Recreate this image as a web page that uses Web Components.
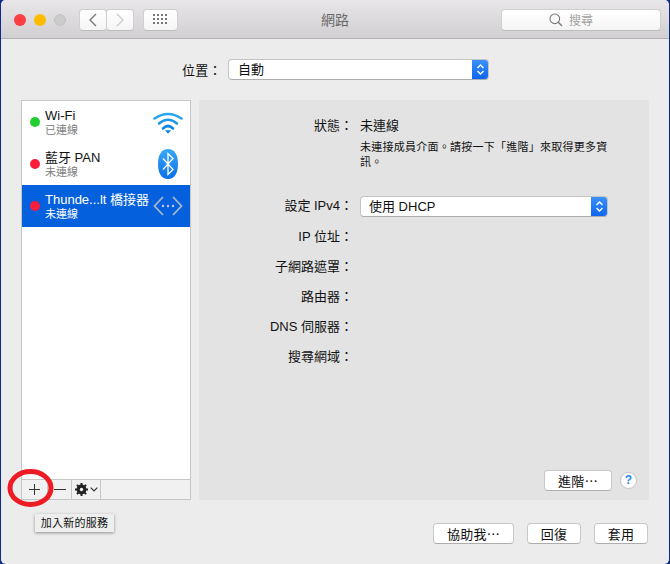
<!doctype html>
<html>
<head>
<meta charset="utf-8">
<style>
html,body{margin:0;padding:0;background:#0b2a8a;}
body{width:670px;height:564px;overflow:hidden;font-family:"Liberation Sans","Noto Sans CJK TC",sans-serif;font-size:13px;color:#1a1a1a;}
</style>
</head>
<body>
<template id="tool-btn-tpl">
<style>
:host{display:flex;align-items:center;justify-content:center;box-sizing:border-box;height:22px;background:linear-gradient(#fff,#f5f5f5);border:1px solid #cfcfcf;border-bottom-color:#bdbdbd;border-radius:4px;}
</style>
<slot></slot>
</template>

<template id="mac-toolbar-tpl">
<style>
:host{display:flex;align-items:center;box-sizing:border-box;height:39px;padding:1px 8px 0 13px;background:linear-gradient(#e8e6e8,#d1cfd1);border-bottom:1px solid #b1b1b1;border-radius:5px 5px 0 0;position:relative;}
.lights{display:flex;gap:8px;}
.lights i{display:block;width:12px;height:12px;border-radius:50%;}
.r{background:#fc3d44;}.y{background:#fdbc00;}.g{background:#ccc;border:1px solid #c2c2c2;box-sizing:border-box;}
.nav{display:flex;margin-left:13px;}
.nav tool-btn{width:28px;}
.nav tool-btn:last-child{margin-left:-1px;}
.grid{width:35px;margin-left:9px;}
.title{position:absolute;left:0;right:0;top:11px;text-align:center;font-size:14px;color:#6a6a6a;line-height:18px;}
.search{width:160px;margin-left:auto;gap:6px;color:#a2a2a2;font-size:12px;}
.search svg{margin-left:-20px;}
</style>
<div class="lights"><i class="r"></i><i class="y"></i><i class="g"></i></div>
<div class="nav">
<tool-btn><svg width="10" height="14" viewBox="0 0 10 14"><path d="M8 1L2 7l6 6" fill="none" stroke="#777" stroke-width="1.4"/></svg></tool-btn>
<tool-btn><svg width="10" height="14" viewBox="0 0 10 14"><path d="M2 1l6 6-6 6" fill="none" stroke="#ccc" stroke-width="1.4"/></svg></tool-btn>
</div>
<tool-btn class="grid"><svg width="15" height="11" viewBox="0 0 15 11" fill="#777"><rect x="0" y="0" width="2" height="2"/><rect x="4" y="0" width="2" height="2"/><rect x="8" y="0" width="2" height="2"/><rect x="12" y="0" width="2" height="2"/><rect x="0" y="4" width="2" height="2"/><rect x="4" y="4" width="2" height="2"/><rect x="8" y="4" width="2" height="2"/><rect x="12" y="4" width="2" height="2"/><rect x="0" y="8" width="2" height="2"/><rect x="4" y="8" width="2" height="2"/><rect x="8" y="8" width="2" height="2"/><rect x="12" y="8" width="2" height="2"/></svg></tool-btn>
<div class="title"><slot></slot></div>
<tool-btn class="search"><svg width="14" height="14" viewBox="0 0 14 14"><circle cx="5.8" cy="5.8" r="4.8" fill="none" stroke="#777" stroke-width="1.1"/><path d="M9.3 9.3L13 13" stroke="#777" stroke-width="1.3"/></svg><span>搜尋</span></tool-btn>
</template>

<template id="pop-up-tpl">
<style>
:host{display:flex;box-sizing:border-box;height:21px;background:#fff;border:1px solid #c4c4c4;border-bottom-color:#adadad;border-radius:4px;font-size:13px;line-height:19px;color:#111;overflow:hidden;}
.t{flex:1;padding-left:var(--pop-pad,9px);}
.a{width:17px;margin:-1px -1px -1px 0;background:linear-gradient(#3d93fb,#0b63f0);display:flex;align-items:center;justify-content:center;}
</style>
<div class="t"><slot></slot></div>
<div class="a"><svg width="9" height="13" viewBox="0 0 9 13"><path d="M1.5 5L4.5 2l3 3M1.5 8l3 3 3-3" fill="none" stroke="#fff" stroke-width="1.4"/></svg></div>
</template>

<template id="service-item-tpl">
<style>
:host{display:flex;align-items:center;height:42px;box-sizing:border-box;padding:0 6px 0 8px;}
:host([selected]){background:#0560dd;color:#fff;}
.dot{width:10px;height:10px;border-radius:50%;margin-right:5px;flex:none;background:#fc1d3c;}
:host([status=on]) .dot{background:#1fd030;}
.txt{flex:1;min-width:0;white-space:nowrap;padding-top:1px;}
.n{font-size:13px;line-height:15px;color:#111;}
.s{font-size:11px;line-height:13px;margin-top:1px;color:#808080;}
:host([selected]) .n,:host([selected]) .s{color:#fff;}
.ic{width:32px;height:32px;display:flex;align-items:center;justify-content:center;flex:none;}
</style>
<span class="dot"></span>
<div class="txt"><div class="n"><slot></slot></div><div class="s"><slot name="sub"></slot></div></div>
<div class="ic"><slot name="icon"></slot></div>
</template>

<template id="service-list-tpl">
<style>
:host{display:flex;flex-direction:column;box-sizing:border-box;width:170px;background:#fff;border:1px solid #c6c6c6;}
.items{flex:1;}
.bar{display:flex;height:20px;box-sizing:border-box;border-top:1px solid #c6c6c6;background:#f1f1f1;}
.bar div{display:flex;align-items:center;justify-content:center;border-right:1px solid #c6c6c6;box-sizing:border-box;}
.bar div:last-child{border:0;flex:1;}
</style>
<div class="items"><slot></slot></div>
<div class="bar">
<div style="width:26px"><svg width="11" height="11" viewBox="0 0 11 11"><path d="M5.5 0v11M0 5.5h11" stroke="#333" stroke-width="1"/></svg></div>
<div style="width:24px"><svg width="12" height="3" viewBox="0 0 12 3"><path d="M0 1.5h12" stroke="#333" stroke-width="1"/></svg></div>
<div style="width:29px;gap:2px"><svg width="13" height="13" viewBox="0 0 13 13"><circle cx="6.5" cy="6.5" r="3.6" fill="none" stroke="#222" stroke-width="2.6"/><path d="M6.5 0v13M0 6.5h13M1.9 1.9l9.2 9.2M11.1 1.9l-9.2 9.2" stroke="#222" stroke-width="2"/><circle cx="6.5" cy="6.5" r="1.7" fill="#f1f1f1"/></svg><svg width="8" height="5" viewBox="0 0 8 5"><path d="M.7.7L4 4 7.3.7" fill="none" stroke="#333" stroke-width="1.2"/></svg></div>
<div></div>
</div>
</template>

<template id="form-row-tpl">
<style>
:host{display:grid;grid-template-columns:154px 1fr;column-gap:7px;align-items:start;font-size:13px;line-height:20px;color:#111;}
.l{text-align:right;white-space:nowrap;}
</style>
<div class="l"><slot name="label"></slot></div>
<div><slot></slot></div>
</template>

<template id="push-btn-tpl">
<style>
:host{display:flex;align-items:center;justify-content:center;box-sizing:border-box;height:21px;background:#fff;border:1px solid #c8c8c8;border-bottom-color:#aeaeae;border-radius:4px;font-size:13px;color:#111;letter-spacing:.3px;}
</style>
<slot></slot>
</template>

<template id="mac-window-tpl">
<style>
:host{display:block;width:670px;height:564px;box-sizing:border-box;background:#ececec;border-radius:5px;position:relative;overflow:hidden;border-left:1px solid #0b2a8a;border-right:1px solid #0b2a8a;}
</style>
<slot></slot>
</template>

<template id="net-pane-tpl">
<style>
:host{display:flex;gap:8px;padding:0 20px;height:400px;}
.right{flex:1;background:#e3e3e3;border-radius:3px;box-sizing:border-box;position:relative;padding:16px 0 0;display:flex;flex-direction:column;}
.foot{margin-top:auto;display:flex;justify-content:flex-end;align-items:center;gap:8px;padding:0 12px 9px 0;}
</style>
<slot name="list"></slot>
<div class="right"><slot></slot><div class="foot"><slot name="foot"></slot></div></div>
</template>

<mac-window>
  <mac-toolbar>網路</mac-toolbar>
  <div style="display:flex;align-items:center;height:21px;margin:20px 0 20px 181px;font-size:13px;color:#111;gap:6px">
    <span style="white-space:nowrap;letter-spacing:.3px;margin-top:-1px">位置：</span>
    <pop-up style="width:261px">自動</pop-up>
  </div>
  <net-pane>
    <service-list slot="list">
      <service-item status="on">Wi-Fi<span slot="sub">已連線</span>
        <svg slot="icon" width="32" height="26" viewBox="0 0 32 26" fill="none" stroke-linecap="round">
          <defs><linearGradient id="wf" x1="0" y1="0" x2="0" y2="1"><stop offset="0" stop-color="#34aef0"/><stop offset="1" stop-color="#0a7fe0"/></linearGradient></defs>
          <g stroke="url(#wf)" stroke-width="2.600"><path d="M2.500 9.500Q16 .500 29.500 9.500" stroke="#2aa6ee"/><path d="M7 14.500Q16 7 25 14.500" stroke="#1f98ea"/><path d="M11 19.500Q16 14.500 21 19.500" stroke="#1389e4"/></g>
          <path d="M13 21.200h6L16 24.800z" fill="#0a7fe0"/></svg>
      </service-item>
      <service-item>藍牙 PAN<span slot="sub">未連線</span>
        <svg slot="icon" width="20" height="30" viewBox="0 0 20 30">
          <defs><linearGradient id="bt" x1="0" y1="0" x2="0" y2="1"><stop offset="0" stop-color="#3aa8f8"/><stop offset="1" stop-color="#0a6fe8"/></linearGradient></defs>
          <path d="M10 0C16.500 0 20 6 20 15S16.500 30 10 30 0 24 0 15 3.500 0 10 0z" fill="url(#bt)"/><path d="M5 9.500l10 11-5 5v-21l5 5-10 11" fill="none" stroke="#fff" stroke-width="1.300"/></svg>
      </service-item>
      <service-item selected>Thunde...lt 橋接器<span slot="sub">未連線</span>
        <svg slot="icon" width="32" height="24" viewBox="0 0 32 24" fill="none" stroke="#a9b7cc" stroke-width="1.800"><path d="M11 3L2.500 12l8.500 9M21 3l8.500 9-8.500 9"/><circle cx="11" cy="12" r="1.200" fill="#bcc7d8" stroke="none"/><circle cx="16" cy="12" r="1.200" fill="#bcc7d8" stroke="none"/><circle cx="21" cy="12" r="1.200" fill="#bcc7d8" stroke="none"/></svg>
      </service-item>
    </service-list>
    <form-row style="margin-bottom:4px"><span slot="label">狀態：</span>未連線</form-row>
    <form-row style="margin-bottom:26px"><span slot="label"></span><div style="font-size:11px;line-height:15px;width:250px;letter-spacing:.25px">未連接成員介面。請按一下「進階」來取得更多資訊。</div></form-row>
    <form-row style="margin-bottom:10px"><span slot="label">設定 IPv4：</span><pop-up style="width:248px;--pop-pad:8px">使用 DHCP</pop-up></form-row>
    <form-row style="margin-bottom:10px"><span slot="label">IP 位址：</span></form-row>
    <form-row style="margin-bottom:10px"><span slot="label">子網路遮罩：</span></form-row>
    <form-row style="margin-bottom:10px"><span slot="label">路由器：</span></form-row>
    <form-row style="margin-bottom:10px"><span slot="label">DNS 伺服器：</span></form-row>
    <form-row><span slot="label">搜尋網域：</span></form-row>
    <push-btn slot="foot" style="width:68px">進階⋯</push-btn>
    <span slot="foot" style="box-sizing:border-box;width:17px;height:17px;border-radius:50%;background:#fff;border:1px solid #c4c4c4;color:#1e86ee;font:bold 12px/15px 'Liberation Sans',sans-serif;text-align:center">?</span>
  </net-pane>
  <div style="display:flex;justify-content:flex-end;gap:13px;padding:23px 21px 0 0">
    <push-btn style="width:81px">協助我⋯</push-btn>
    <push-btn style="width:54px">回復</push-btn>
    <push-btn style="width:54px">套用</push-btn>
  </div>
  <div style="position:absolute;left:34px;top:514px;width:79px;height:18px;background:#eee;box-shadow:0 1px 3px rgba(0,0,0,.4);font-size:11px;line-height:18px;text-align:center;color:#111;letter-spacing:.25px">加入新的服務</div>
  <svg style="position:absolute;left:5px;top:468px" width="50" height="42" viewBox="0 0 50 42"><ellipse cx="24.500" cy="20" rx="20.500" ry="16.500" fill="none" stroke="#ed1c24" stroke-width="5"/></svg>
</mac-window>
<script>
function reg(name){
  customElements.define(name, class extends HTMLElement {
    constructor(){
      super()
      this.attachShadow({mode:'open'}).appendChild(document.getElementById(name+'-tpl').content.cloneNode(true))
    }
  })
}
// inner elements first so nested templates upgrade as they are cloned
;['tool-btn','pop-up','push-btn','service-item','service-list','form-row','mac-toolbar','net-pane','mac-window'].forEach(reg)
</script>
</body>
</html>
